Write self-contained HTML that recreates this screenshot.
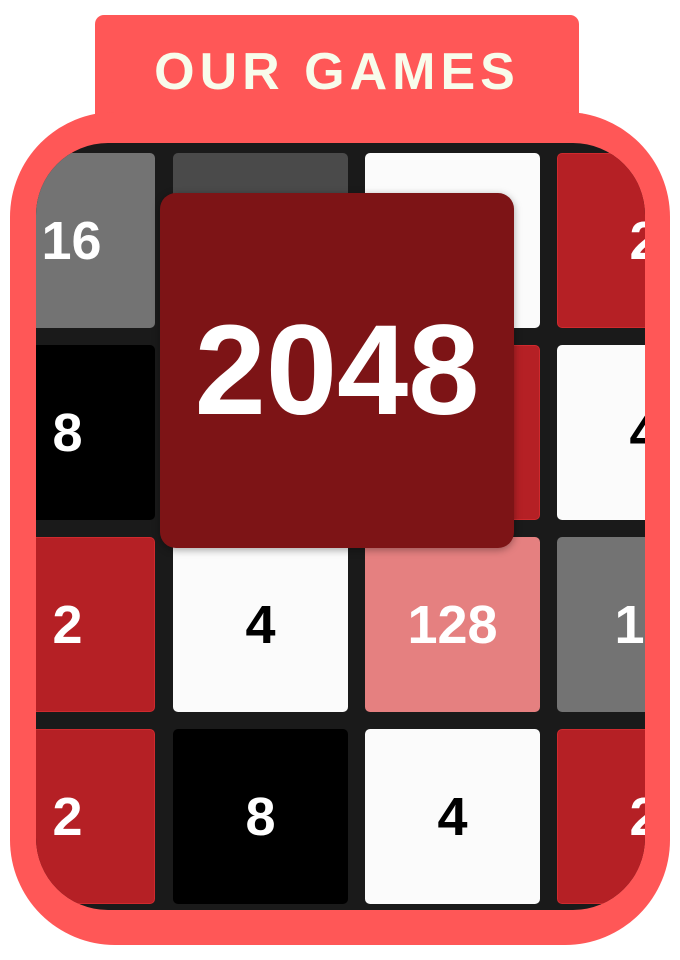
<!DOCTYPE html>
<html><head><meta charset="utf-8"><style>
html,body{margin:0;padding:0;background:#fff;width:680px;height:960px;overflow:hidden;position:relative;font-family:"Liberation Sans",sans-serif}
.tab{position:absolute;left:95px;top:15px;width:484px;height:120px;background:#ff5757;border-radius:9px}
.title{position:absolute;left:95px;top:42px;width:484px;text-align:center;color:#f8fceb;font-weight:bold;font-size:52px;letter-spacing:5px;line-height:60px}
.frame{position:absolute;left:10px;top:112px;width:660px;height:833px;background:#ff5757;border-radius:105px}
.board{position:absolute;left:36px;top:143px;width:609px;height:767px;background:#1a1a1a;border-radius:72px;overflow:hidden}
.t{position:absolute;width:175px;height:175px;border-radius:5px;display:flex;align-items:center;justify-content:center;font-weight:bold;font-size:54px;color:#fff;box-sizing:border-box}
.r{background:#b52025;border:1px solid #d02a2e}
.w{background:#fbfbfb;color:#000}
.k{background:#000}
.g{background:#737373}
.d{background:#4a4a4a}
.p{background:#e58080}
.card{position:absolute;left:160px;top:193px;width:354px;height:355px;background:#7d1416;border-radius:16px;box-shadow:0 2px 8px rgba(0,0,0,.35);color:#fff;font-size:128px;font-weight:bold;display:flex;align-items:center;justify-content:center}
</style></head><body>
<div class="tab"></div>
<div class="frame"></div>
<div class="title">OUR GAMES</div>
<div class="board">
<div class="t g" style="left:-56px;top:10px;padding-left:8px">16</div>
<div class="t d" style="left:137px;top:10px"></div>
<div class="t w" style="left:329px;top:10px"></div>
<div class="t r" style="left:521px;top:10px">2</div>
<div class="t k" style="left:-56px;top:202px">8</div>
<div class="t k" style="left:137px;top:202px"></div>
<div class="t r" style="left:329px;top:202px"></div>
<div class="t w" style="left:521px;top:202px">4</div>
<div class="t r" style="left:-56px;top:394px">2</div>
<div class="t w" style="left:137px;top:394px">4</div>
<div class="t p" style="left:329px;top:394px">128</div>
<div class="t g" style="left:521px;top:394px">16</div>
<div class="t r" style="left:-56px;top:586px">2</div>
<div class="t k" style="left:137px;top:586px">8</div>
<div class="t w" style="left:329px;top:586px">4</div>
<div class="t r" style="left:521px;top:586px">2</div>
</div>
<div class="card">2048</div>
</body></html>
